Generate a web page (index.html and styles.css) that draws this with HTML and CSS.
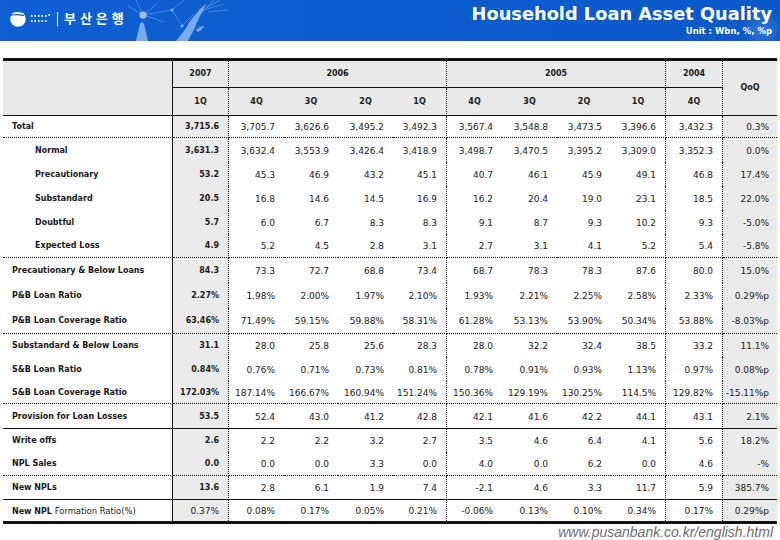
FILE: index.html
```html
<!DOCTYPE html>
<html lang="en">
<head>
<meta charset="utf-8">
<title>Household Loan Asset Quality</title>
<link rel="stylesheet" href="styles.css">
</head>
<body>
<header class="banner">
  <div class="brand">
    <svg class="brand-mark" width="60" height="40" viewBox="0 0 60 40" aria-hidden="true">
      <circle cx="18" cy="19" r="7.8" fill="#fff"/>
      <path d="M9.3 13 Q15 10.2 22.5 12.3 M9 16 Q15 13.3 24 15.6" stroke="#0d5ed0" stroke-width="1.3" fill="none"/>
      <g fill="#fff">
        <rect x="31" y="15" width="1.5" height="2"/><rect x="34.5" y="15" width="1.5" height="2"/><rect x="38" y="15" width="1.5" height="2"/><rect x="41.5" y="15" width="1.5" height="2"/><rect x="45" y="15" width="1.5" height="2"/><rect x="48.5" y="14" width="1.5" height="2"/>
        <rect x="31" y="20" width="1.5" height="2"/><rect x="34.5" y="20" width="1.5" height="2"/><rect x="38" y="20" width="1.5" height="2"/><rect x="41.5" y="20" width="1.5" height="2"/><rect x="45" y="20" width="1.5" height="2"/>
        <rect x="57" y="12" width="1" height="14"/>
      </g>
    </svg>
    <span class="brand-name">부 산 은 행</span>
    <svg class="brand-art" width="110" height="41" viewBox="0 0 110 41" aria-hidden="true">
      <g stroke="#7aaef0" stroke-width="0.7" fill="none" opacity="0.75">
        <path d="M19 15 L4 6 M19 15 L12 0 M19 15 L34 3 M19 15 L40 22 M19 15 L48 10 M48 10 L60 0 M48 10 L58 26 M58 26 L70 14"/>
        <path d="M78 12 L90 0 M80 10 L100 4 M82 8 L96 0 M84 12 L104 10"/>
      </g>
      <g fill="#86b5f0" opacity="0.9">
        <circle cx="19" cy="15" r="3.6" fill="#a9cbf6"/>
        <circle cx="48" cy="10" r="1.5"/>
        <circle cx="58" cy="26" r="1.5"/>
        <path d="M12 41 Q14 32 16 24 Q18 20 20 24 Q22 32 24 41 Z"/>
        <path d="M52 41 Q58 34 62 28 Q66 20 72 14 Q76 8 82 4 Q80 10 76 16 Q72 24 70 30 Q66 36 64 41 Z"/>
        <path d="M72 30 Q76 26 80 26 Q78 30 74 32 Z"/>
      </g>
    </svg>
  </div>
  <div class="heading">
    <h1 class="title">Household Loan Asset Quality</h1>
    <p class="unit">Unit : Wbn, %, %p</p>
  </div>
</header>

<table class="quality">
  <colgroup>
    <col class="c-label"><col class="c-56">
    <col class="c-55"><col class="c-54"><col class="c-55"><col class="c-54">
    <col class="c-55"><col class="c-55"><col class="c-54"><col class="c-55">
    <col class="c-57"><col class="c-54">
  </colgroup>
  <thead>
    <tr class="h1">
      <th class="hl" rowspan="2"></th>
      <th class="hy hy-cur">2007</th>
      <th class="hy hy-dot" colspan="4">2006</th>
      <th class="hy hy-dot" colspan="4">2005</th>
      <th class="hy hy-dot">2004</th>
      <th class="hq" rowspan="2">QoQ</th>
    </tr>
    <tr class="h2">
      <th class="hqr hy-cur">1Q</th>
      <th class="hqr">4Q</th><th class="hqr">3Q</th><th class="hqr">2Q</th><th class="hqr hy-dot">1Q</th>
      <th class="hqr">4Q</th><th class="hqr">3Q</th><th class="hqr">2Q</th><th class="hqr hy-dot">1Q</th>
      <th class="hqr hy-dot">4Q</th>
    </tr>
  </thead>
  <tbody>
    <tr class="r22 dot"><td>Total</td><td>3,715.6</td><td>3,705.7</td><td>3,626.6</td><td>3,495.2</td><td>3,492.3</td><td>3,567.4</td><td>3,548.8</td><td>3,473.5</td><td>3,396.6</td><td>3,432.3</td><td>0.3%</td></tr>
    <tr class="r24"><td class="ind">Normal</td><td>3,631.3</td><td>3,632.4</td><td>3,553.9</td><td>3,426.4</td><td>3,418.9</td><td>3,498.7</td><td>3,470.5</td><td>3,395.2</td><td>3,309.0</td><td>3,352.3</td><td>0.0%</td></tr>
    <tr class="r24"><td class="ind">Precautionary</td><td>53.2</td><td>45.3</td><td>46.9</td><td>43.2</td><td>45.1</td><td>40.7</td><td>46.1</td><td>45.9</td><td>49.1</td><td>46.8</td><td>17.4%</td></tr>
    <tr class="r24"><td class="ind">Substandard</td><td>20.5</td><td>16.8</td><td>14.6</td><td>14.5</td><td>16.9</td><td>16.2</td><td>20.4</td><td>19.0</td><td>23.1</td><td>18.5</td><td>22.0%</td></tr>
    <tr class="r24"><td class="ind">Doubtful</td><td>5.7</td><td>6.0</td><td>6.7</td><td>8.3</td><td>8.3</td><td>9.1</td><td>8.7</td><td>9.3</td><td>10.2</td><td>9.3</td><td>-5.0%</td></tr>
    <tr class="r24 dot"><td class="ind">Expected Loss</td><td>4.9</td><td>5.2</td><td>4.5</td><td>2.8</td><td>3.1</td><td>2.7</td><td>3.1</td><td>4.1</td><td>5.2</td><td>5.4</td><td>-5.8%</td></tr>
    <tr class="r25"><td>Precautionary &amp; Below Loans</td><td>84.3</td><td>73.3</td><td>72.7</td><td>68.8</td><td>73.4</td><td>68.7</td><td>78.3</td><td>78.3</td><td>87.6</td><td>80.0</td><td>15.0%</td></tr>
    <tr class="r25"><td>P&amp;B Loan Ratio</td><td>2.27%</td><td>1.98%</td><td>2.00%</td><td>1.97%</td><td>2.10%</td><td>1.93%</td><td>2.21%</td><td>2.25%</td><td>2.58%</td><td>2.33%</td><td>0.29%p</td></tr>
    <tr class="r26 dot"><td>P&amp;B Loan Coverage Ratio</td><td>63.46%</td><td>71.49%</td><td>59.15%</td><td>59.88%</td><td>58.31%</td><td>61.28%</td><td>53.13%</td><td>53.90%</td><td>50.34%</td><td>53.88%</td><td>-8.03%p</td></tr>
    <tr class="r23"><td>Substandard &amp; Below Loans</td><td>31.1</td><td>28.0</td><td>25.8</td><td>25.6</td><td>28.3</td><td>28.0</td><td>32.2</td><td>32.4</td><td>38.5</td><td>33.2</td><td>11.1%</td></tr>
    <tr class="r24"><td>S&amp;B Loan Ratio</td><td>0.84%</td><td>0.76%</td><td>0.71%</td><td>0.73%</td><td>0.81%</td><td>0.78%</td><td>0.91%</td><td>0.93%</td><td>1.13%</td><td>0.97%</td><td>0.08%p</td></tr>
    <tr class="r23 dot"><td>S&amp;B Loan Coverage Ratio</td><td>172.03%</td><td>187.14%</td><td>166.67%</td><td>160.94%</td><td>151.24%</td><td>150.36%</td><td>129.19%</td><td>130.25%</td><td>114.5%</td><td>129.82%</td><td>-15.11%p</td></tr>
    <tr class="r25 solid"><td>Provision for Loan Losses</td><td>53.5</td><td>52.4</td><td>43.0</td><td>41.2</td><td>42.8</td><td>42.1</td><td>41.6</td><td>42.2</td><td>44.1</td><td>43.1</td><td>2.1%</td></tr>
    <tr class="r23"><td>Write offs</td><td>2.6</td><td>2.2</td><td>2.2</td><td>3.2</td><td>2.7</td><td>3.5</td><td>4.6</td><td>6.4</td><td>4.1</td><td>5.6</td><td>18.2%</td></tr>
    <tr class="r24 dot"><td>NPL Sales</td><td>0.0</td><td>0.0</td><td>0.0</td><td>3.3</td><td>0.0</td><td>4.0</td><td>0.0</td><td>6.2</td><td>0.0</td><td>4.6</td><td>-%</td></tr>
    <tr class="r24 solid"><td>New NPLs</td><td>13.6</td><td>2.8</td><td>6.1</td><td>1.9</td><td>7.4</td><td>-2.1</td><td>4.6</td><td>3.3</td><td>11.7</td><td>5.9</td><td>385.7%</td></tr>
    <tr class="r21 last"><td><b>New NPL</b> <span class="thin">Formation Ratio(%)</span></td><td class="plain">0.37%</td><td>0.08%</td><td>0.17%</td><td>0.05%</td><td>0.21%</td><td>-0.06%</td><td>0.13%</td><td>0.10%</td><td>0.34%</td><td>0.17%</td><td>0.29%p</td></tr>
  </tbody>
</table>

<footer class="site">www.pusanbank.co.kr/english.html</footer>
</body>
</html>
```

FILE: styles.css
```css
html, body {
  margin: 0;
  padding: 0;
  background: #fff;
}

body {
  width: 780px;
  height: 540px;
  overflow: hidden;
  font-family: "DejaVu Sans", Verdana, sans-serif;
  color: #1a1a1a;
}

/* ---------- banner ---------- */
.banner {
  height: 41px;
  background:
    radial-gradient(circle at 762px 30px, rgba(120, 170, 235, 0.35) 0, rgba(120, 170, 235, 0.15) 14px, rgba(120, 170, 235, 0) 20px),
    linear-gradient(90deg, #0e60d2 0%, #0b5ccd 60%, #0a59c8 100%);
  display: flex;
  justify-content: space-between;
  align-items: flex-start;
  color: #fff;
  overflow: hidden;
}

.brand {
  display: flex;
  align-items: flex-start;
  height: 41px;
}

.brand-mark {
  display: block;
  flex: none;
}

.brand-name {
  font-family: "Noto Sans CJK KR", "Noto Sans", sans-serif;
  font-weight: 700;
  font-size: 13px;
  line-height: 16px;
  letter-spacing: 0.5px;
  margin: 10px 0 0 4px;
  white-space: nowrap;
}

.brand-art {
  display: block;
  flex: none;
  margin-left: 0;
}

.heading {
  text-align: right;
  padding: 4px 8px 0 0;
}

.title {
  margin: 0;
  font-family: "DejaVu Sans", Verdana, sans-serif;
  font-weight: 700;
  font-size: 17.8px;
  line-height: 20px;
  white-space: nowrap;
}

.unit {
  margin: 2px 0 0;
  font-size: 8.5px;
  font-weight: 700;
  line-height: 10px;
  white-space: nowrap;
}

/* ---------- table ---------- */
.quality {
  margin: 17px 0 0 3px;
  width: 774px;
  table-layout: fixed;
  border-collapse: separate;
  border-spacing: 0;
  border-top: 3px solid #111;
  border-bottom: 3px solid #111;
}

.c-label { width: 170px; }
.c-54 { width: 54px; }
.c-55 { width: 55px; }
.c-56 { width: 56px; }
.c-57 { width: 57px; }

.quality th,
.quality td {
  padding: 1px 9px 0 0;
  line-height: 10px;
  white-space: nowrap;
  overflow: hidden;
}

.quality th {
  background: #e9e9e9;
  font-size: 8px;
  font-weight: 700;
  text-align: center;
  padding: 0;
}

.h1 { height: 27px; }
.h2 { height: 28px; }

.h1 .hy {
  border-bottom: 1px solid #111;
}

.hl {
  border-right: 1px solid #111;
  border-bottom: 1px solid #111;
}

.hq {
  border-bottom: 1px solid #111;
}

.h2 th {
  border-bottom: 1px solid #111;
}

.hy-cur,
.hy-dot {
  border-right: 1px dotted #111;
}

/* body cells */
.quality td {
  font-size: 9px;
  text-align: right;
  color: #222;
}

.quality td:first-child {
  text-align: left;
  padding: 1px 0 0 9px;
  font-size: 8px;
  font-weight: 700;
  border-right: 1px solid #111;
  color: #1a1a1a;
}

.quality td.ind {
  padding-left: 32px;
}

.quality td:nth-child(2) {
  background: #ebebeb;
  font-size: 8px;
  font-weight: 700;
  color: #1a1a1a;
}

.quality td:nth-child(2).plain {
  font-size: 9px;
  font-weight: 400;
}

.quality td:nth-child(12) {
  background: #ebebeb;
  padding-right: 8px;
}

.quality td:nth-child(2),
.quality td:nth-child(6),
.quality td:nth-child(10),
.quality td:nth-child(11) {
  border-right: 1px dotted #111;
}

.thin {
  font-weight: 400;
  font-size: 8.4px;
}

.r21 { height: 21px; }
.r22 { height: 22px; }
.r23 { height: 23px; }
.r24 { height: 24px; }
.r25 { height: 25px; }
.r26 { height: 26px; }

.dot td { border-bottom: 1px dotted #111; }
.solid td { border-bottom: 1px solid #111; }

/* ---------- footer ---------- */
.site {
  text-align: right;
  padding-right: 7px;
  margin-top: 1px;
  font-family: "Liberation Sans", Arial, sans-serif;
  font-style: italic;
  font-size: 14px;
  line-height: 15px;
  color: #6e6e6e;
}
```
